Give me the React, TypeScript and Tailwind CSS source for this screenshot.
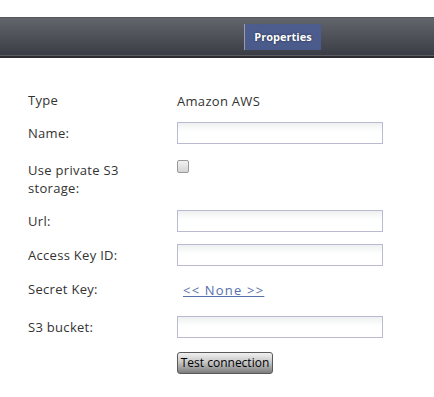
import React from 'react'

const font = { fontFamily: '"Open Sans", "Noto Sans", sans-serif' }

function TextInput() {
  return (
    <input
      type="text"
      className="w-[206px] h-[22px] border border-[#b9b9cf] bg-[linear-gradient(#eef0f0,#ffffff_45%)] outline-none"
    />
  )
}

function Row({ label, height, children, top }: { label: React.ReactNode; height: number; children?: React.ReactNode; top?: boolean }) {
  return (
    <div className={top ? 'flex items-start' : 'flex items-center'} style={{ height }}>
      <div className={(top ? 'pt-[8px] ' : '') + 'w-[177px] shrink-0 pl-[28px] text-[13px] leading-[18px] tracking-[0.3px] text-[#333]'}>{label}</div>
      <div className="flex-1">{children}</div>
    </div>
  )
}

export default function App() {
  return (
    <div className="w-[434px] h-[397px] bg-white overflow-hidden" style={font}>
      {/* Top bar */}
      <div className="mt-[17px] h-[41px] flex flex-col">
        <div className="h-px bg-[#55575a]" />
        <div className="flex-1 flex items-start bg-[linear-gradient(#62656b,#3a3d45)] pl-[244px]">
          <div className="mt-[6px] h-[26px] flex">
            <div className="w-px bg-[#9c9ea3]" />
            <div className="w-[76px] flex items-center justify-center bg-[linear-gradient(#4d5d8d,#4a5a8a)] text-white text-[11px] font-bold [text-shadow:0_0_2px_#1c2440]">
              Properties
            </div>
          </div>
        </div>
        <div className="h-px bg-[#5b5d61]" />
        <div className="h-[2px] bg-[#2c2d30]" />
      </div>

      {/* Form */}
      <div className="mt-[30px]">
        <Row label="Type" height={24}>
          <span className="text-[13px] tracking-[0.3px] text-[#333]">Amazon AWS</span>
        </Row>
        <Row label="Name:" height={41}>
          <TextInput />
        </Row>
        <Row label={<>Use private S3<br />storage:</>} height={48} top>
          <div className="pt-[7px]">
            <input type="checkbox" className="appearance-none block w-[12px] h-[13px] rounded-[2px] border border-[#9a9a9a] bg-[linear-gradient(#f2f2f2,#d4d4d4)]" />
          </div>
        </Row>
        <Row label="Url:" height={39}>
          <TextInput />
        </Row>
        <Row label="Access Key ID:" height={29}>
          <TextInput />
        </Row>
        <Row label="Secret Key:" height={40}>
          <a href="#" className="ml-[6px] text-[13px] tracking-[1.2px] text-[#5570aa] underline -mt-[3px] inline-block">&lt;&lt; None &gt;&gt;</a>
        </Row>
        <Row label="S3 bucket:" height={35}>
          <TextInput />
        </Row>
        <Row label="" height={34}>
          <button className="h-[22px] w-[96px] rounded-[3px] border border-[#5a5a5a] bg-[linear-gradient(#f0f0f0,#c8c8c8_45%,#7c7c7c)] text-[12px] text-black leading-none">
            Test connection
          </button>
        </Row>
      </div>
    </div>
  )
}
